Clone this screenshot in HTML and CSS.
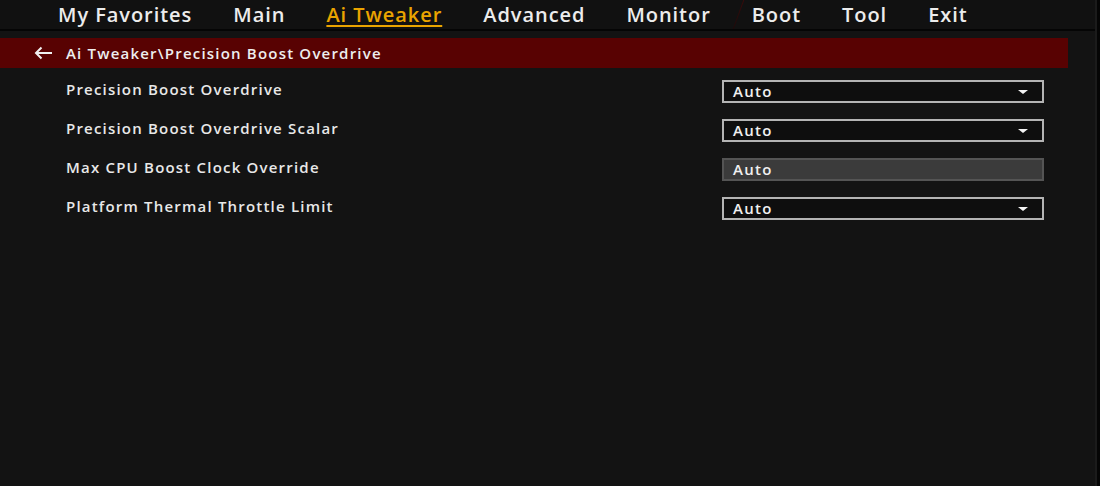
FILE: index.html
```html
<!DOCTYPE html>
<html>
<head>
<meta charset="utf-8">
<link rel="stylesheet" href="styles.css">
</head>
<body>
<div class="screen">
  <div class="main">
    <nav class="tabs">
      <span class="tab">My Favorites</span>
      <span class="tab">Main</span>
      <span class="tab active">Ai Tweaker</span>
      <span class="tab">Advanced</span>
      <span class="tab">Monitor</span>
      <span class="tab">Boot</span>
      <span class="tab">Tool</span>
      <span class="tab">Exit</span>
      <span class="slash"></span>
    </nav>
    <div class="crumb">
      <svg class="back" width="20" height="14" viewBox="0 0 20 14"><path d="M19 7H3M8.5 1.5L3 7l5.5 5.5" fill="none" stroke="#f0f0f0" stroke-width="2"/></svg>
      <span>Ai Tweaker\Precision Boost Overdrive</span>
    </div>
    <div class="list">
      <div class="row">
        <span class="label">Precision Boost Overdrive</span>
        <div class="select"><span>Auto</span><i class="caret"></i></div>
      </div>
      <div class="row">
        <span class="label">Precision Boost Overdrive Scalar</span>
        <div class="select"><span>Auto</span><i class="caret"></i></div>
      </div>
      <div class="row">
        <span class="label">Max CPU Boost Clock Override</span>
        <div class="select disabled"><span>Auto</span></div>
      </div>
      <div class="row">
        <span class="label">Platform Thermal Throttle Limit</span>
        <div class="select"><span>Auto</span><i class="caret"></i></div>
      </div>
    </div>
  </div>
  <div class="edge"></div>
</div>
</body>
</html>
```
FILE: styles.css
```css
html, body {
  margin: 0;
  padding: 0;
  background: #131313;
  font-family: "Open Sans", "Noto Sans", sans-serif;
  font-weight: 600;
  color: #ececec;
}
.screen {
  display: flex;
  width: 1100px;
  height: 486px;
  overflow: hidden;
}
.main {
  flex: 1;
  display: flex;
  flex-direction: column;
}
.edge {
  width: 3px;
  background: #050505;
  border-left: 2px solid #1b1b1b;
}
.tabs {
  position: relative;
  display: flex;
  gap: 41px;
  height: 29px;
  padding-left: 58px;
  background: #111111;
  border-bottom: 2px solid #050505;
  font-size: 20px;
  letter-spacing: 0.95px;
  line-height: 30px;
}
.tab {
  color: #ececec;
}
.tab.active {
  color: #eaa400;
  text-decoration: underline;
  text-decoration-thickness: 2px;
  text-underline-offset: 3px;
}
.slash {
  position: absolute;
  left: 738px;
  top: 0;
  width: 1px;
  height: 29px;
  background: linear-gradient(#3a0a0a, #1e0909);
  transform: skewX(-20deg);
}
.crumb {
  margin-top: 7px;
  width: 1068px;
  height: 30px;
  background: #580202;
  display: flex;
  align-items: center;
  font-size: 15px;
  letter-spacing: 1.2px;
  color: #eeeeee;
}
.back {
  margin-left: 33px;
  margin-right: 13px;
}
.list {
  display: flex;
  flex-direction: column;
  gap: 16px;
  padding-top: 12px;
}
.row {
  display: flex;
  align-items: center;
  justify-content: space-between;
  width: 1044px;
  padding-left: 66px;
  box-sizing: border-box;
  height: 23px;
}
.label {
  font-size: 15px;
  letter-spacing: 1.2px;
  color: #e8e8e8;
  margin-top: -5px;
}
.select {
  width: 322px;
  height: 23px;
  box-sizing: border-box;
  border: 2px solid #b4b4b4;
  background: #0e0e0e;
  display: flex;
  align-items: center;
  justify-content: space-between;
  padding: 0 14px 2px 9px;
  font-size: 15px;
  letter-spacing: 1.3px;
  color: #f0f0f0;
}
.select.disabled {
  background: #3b3b3b;
  border-color: #545454;
}
.caret {
  width: 0;
  height: 0;
  margin-top: 2px;
  border-left: 5px solid transparent;
  border-right: 5px solid transparent;
  border-top: 4px solid #f4f4f4;
}
```
